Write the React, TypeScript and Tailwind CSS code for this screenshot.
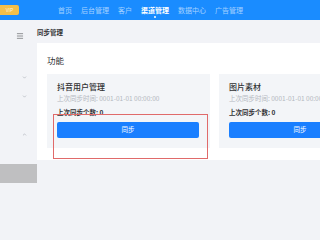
import { ChevronDown, ChevronUp, Menu } from 'lucide-react';

const navItems = ['首页', '后台管理', '客户', '渠道管理', '数据中心', '广告管理'];

const syncCards = [
  { title: '抖音用户管理', time: '0001-01-01 00:00:00', count: 0 },
  { title: '图片素材', time: '0001-01-01 00:00:00', count: 0 },
];

export default function App() {
  return (
    <div
      className="w-[320px] h-[240px] overflow-hidden bg-[#f2f3f7] text-[#303133]"
      style={{ fontFamily: '"Noto Sans CJK SC", "Noto Sans", sans-serif' }}
    >
      {/* top bar */}
      <header className="h-[20px] bg-[#1a8cff] flex items-center">
        <div className="w-[19px] h-[10px] bg-[#f3bf4a] rounded-r-[2px] flex items-center justify-center text-[5px] text-[#fff6dc]">
          VIP
        </div>
        <nav className="flex items-center ml-[39px] gap-[9px]">
          {navItems.map((item) => {
            const active = item === '渠道管理';
            return (
              <div key={item} className="relative flex flex-col items-center">
                <span
                  className={`text-[7px] leading-[10px] ${
                    active ? 'text-white font-bold' : 'text-white/60'
                  }`}
                >
                  {item}
                </span>
                {active && (
                  <div className="absolute top-[11px] w-[2px] h-[2px] rounded-full bg-white" />
                )}
              </div>
            );
          })}
        </nav>
      </header>

      <div className="flex">
        {/* sidebar */}
        <aside className="w-[37px] shrink-0 flex flex-col items-center">
          <div className="h-[23px] flex items-center pl-[2px] pt-[8px]">
            <Menu className="w-[8px] h-[8px] text-[#606266]" strokeWidth={2} />
          </div>
          <div className="h-[25px]" />
          <div className="w-full flex flex-col">
            <div className="h-[19px] flex items-center justify-end pr-[10px]">
              <ChevronDown className="w-[5px] h-[5px] text-[#a9adb5]" strokeWidth={3} />
            </div>
            <div className="h-[19px] flex items-center justify-end pr-[10px]">
              <ChevronDown className="w-[5px] h-[5px] text-[#a9adb5]" strokeWidth={3} />
            </div>
            <div className="h-[19px]" />
            <div className="h-[19px] flex items-center justify-end pr-[10px]">
              <ChevronUp className="w-[5px] h-[5px] text-[#a9adb5]" strokeWidth={3} />
            </div>
            <div className="h-[20px]" />
            <div className="h-[19px] bg-[#bfbfc1]" />
          </div>
        </aside>

        {/* main */}
        <main className="flex-1 min-w-0">
          <div className="h-[23px] flex items-center pt-[3px]">
            <span className="text-[6.5px] font-bold text-[#303133]">同步管理</span>
          </div>
          <section className="bg-white h-[117px] pl-[10px] pt-[12px]">
            <h2 className="text-[8.5px] leading-[11px] text-[#303133] mb-[8px]">功能</h2>
            <div className="flex gap-[9px]">
              {syncCards.map((card, i) => (
                <div
                  key={card.title}
                  className="relative shrink-0 w-[163px] h-[74px] bg-[#f3f5f8] px-[10px] pt-[7px]"
                >
                  <p className="text-[8px] leading-[11px] text-[#303133] font-medium">{card.title}</p>
                  <p className="text-[6.5px] leading-[10px] mt-[1px] text-[#b4b8bf] whitespace-nowrap">
                    上次同步时间: {card.time}
                  </p>
                  <p className="text-[6.5px] leading-[10px] mt-[4px] text-[#303133] font-semibold">
                    上次同步个数: {card.count}
                  </p>
                  <button className="mt-[5px] w-[142px] h-[16px] rounded-[2px] bg-[#1a7fff] text-white text-[6.5px] flex items-center justify-center">
                    同步
                  </button>
                  {i === 0 && (
                    <div className="absolute left-[6px] top-[40px] w-[155px] h-[45px] border border-[#e06a6a]" />
                  )}
                </div>
              ))}
            </div>
          </section>
        </main>
      </div>
    </div>
  );
}
